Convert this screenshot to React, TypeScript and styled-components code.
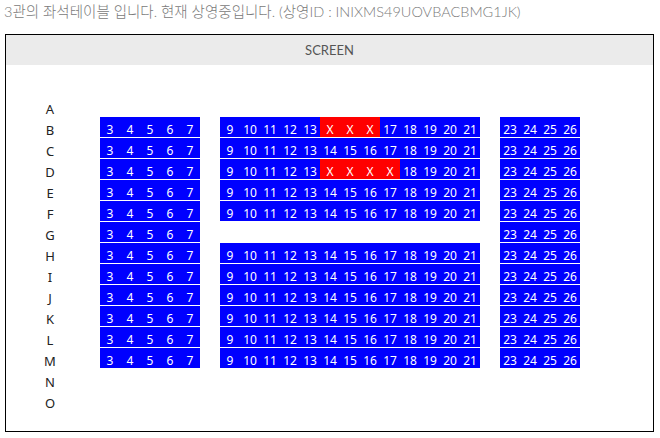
import styled, { createGlobalStyle } from "styled-components";

type SeatStatus = "none" | "open" | "taken";

const GlobalStyle = createGlobalStyle`
    body {
        margin: 0;
        background: #fff;
    }
`;

const StyledPage = styled.div`
    width: 660px;
    padding: 0 6px 0 5px;
    box-sizing: border-box;
`;

const StyledTitle = styled.p`
    margin: 0;
    height: 34px;
    padding-top: 2px;
    box-sizing: border-box;
    font-family: Lato, "Noto Sans CJK KR", sans-serif;
    font-weight: 300;
    font-size: 14.5px;
    line-height: 20px;
    color: #7a7a7a;
    margin-left: -1px;
`;

const StyledBoard = styled.div`
    border: 1px solid #000;
    height: 398px;
    box-sizing: border-box;
`;

const StyledScreen = styled.div`
    height: 30px;
    background-color: #ebebeb;
    display: flex;
    align-items: center;
    justify-content: center;
    font-family: Lato, sans-serif;
    font-size: 13px;
    color: #555;
`;

const StyledTable = styled.div`
    padding: 31px 0 0 34px;
    display: flex;
    flex-direction: column;
`;

const StyledRow = styled.div`
    display: flex;
    height: 21px;
`;

const StyledLabel = styled.div`
    width: 20px;
    padding-top: 5px;
    line-height: 16px;
    text-align: center;
    font-family: "Noto Sans", sans-serif;
    font-size: 13px;
    color: #222;
`;

const StyledSeat = styled.div<{ $status: SeatStatus }>`
    width: 20px;
    height: 21px;
    box-sizing: border-box;
    padding-top: 6px;
    line-height: 14px;
    text-align: center;
    overflow: hidden;
    white-space: nowrap;
    font-family: "Noto Sans", sans-serif;
    font-size: 12px;
    color: #fff;
    border-bottom: 1px solid ${({ $status }) => ($status === "none" ? "transparent" : "#fff")};
    background-color: ${({ $status }) =>
        $status === "open" ? "#0000ff" : $status === "taken" ? "#ff0000" : "transparent"};
    background-clip: padding-box;
`;

const ROWS = "ABCDEFGHIJKLMNO".split("");
const SEAT_COUNT = 26;

// taken seats by row
const TAKEN: Record<string, number[]> = {
    B: [14, 15, 16],
    D: [14, 15, 16, 17],
};

const seatStatus = (row: string, n: number): SeatStatus => {
    if (row === "A" || row === "N" || row === "O") return "none";
    if (n < 3 || n === 8 || n === 22) return "none";
    if (row === "G" && n >= 9 && n <= 21) return "none";
    if (TAKEN[row] && TAKEN[row].includes(n)) return "taken";
    return "open";
};

const App = () => {
    return (
        <StyledPage>
            <GlobalStyle />
            <StyledTitle>3관의 좌석테이블 입니다. 현재 상영중입니다. (상영ID : INIXMS49UOVBACBMG1JK)</StyledTitle>
            <StyledBoard>
                <StyledScreen>SCREEN</StyledScreen>
                <StyledTable>
                    {ROWS.map((row) => (
                        <StyledRow key={row}>
                            <StyledLabel>{row}</StyledLabel>
                            {Array.from({ length: SEAT_COUNT }, (_, i) => {
                                const n = i + 1;
                                const status = seatStatus(row, n);
                                return (
                                    <StyledSeat key={n} $status={status}>
                                        {status === "taken" ? "X" : status === "open" ? n : ""}
                                    </StyledSeat>
                                );
                            })}
                        </StyledRow>
                    ))}
                </StyledTable>
            </StyledBoard>
        </StyledPage>
    );
};

export default App;
